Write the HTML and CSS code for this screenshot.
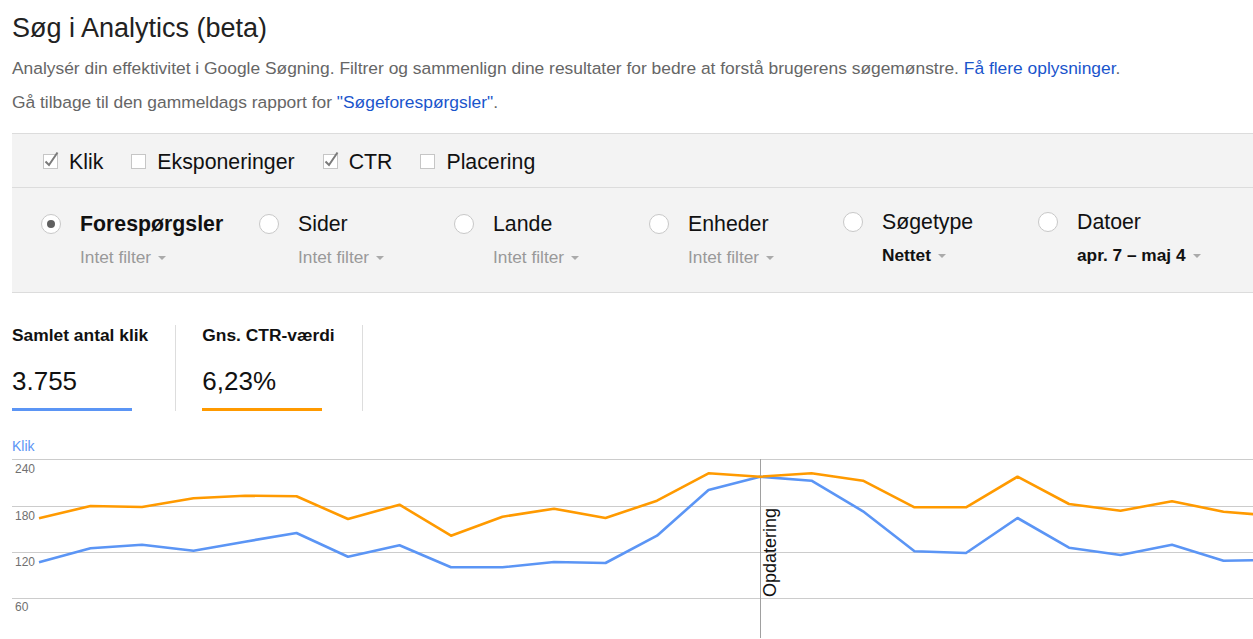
FILE: index.html
```html
<!DOCTYPE html>
<html lang="da">
<head>
    <meta charset="UTF-8">
    <title>Søg i Analytics (beta)</title>
    <link rel="stylesheet" href="styles.css">
</head>
<body>
    <!-- Intro -->
    <h1>Søg i Analytics (beta)</h1>
    <p class="lead">Analysér din effektivitet i Google Søgning. Filtrer og sammenlign dine resultater for bedre at forstå brugerens søgemønstre. <a href="#">Få flere oplysninger</a>.</p>
    <p class="lead">Gå tilbage til den gammeldags rapport for <a href="#">"Søgeforespørgsler"</a>.</p>

    <!-- Filterpanel -->
    <div class="panel">
        <div class="checks">
            <label class="check">
                <svg viewBox="0 0 16 16" width="16" height="16"><rect x="0.5" y="0.5" width="14" height="14" fill="#fff" stroke="#c6c6c6"/><path d="M2.5 7.5 L6 11 L14.5 -1.5" fill="none" stroke="#7a7a7a" stroke-width="2"/></svg>
                Klik
            </label>
            <label class="check">
                <svg viewBox="0 0 16 16" width="16" height="16"><rect x="0.5" y="0.5" width="14" height="14" fill="#fff" stroke="#c6c6c6"/></svg>
                Eksponeringer
            </label>
            <label class="check">
                <svg viewBox="0 0 16 16" width="16" height="16"><rect x="0.5" y="0.5" width="14" height="14" fill="#fff" stroke="#c6c6c6"/><path d="M2.5 7.5 L6 11 L14.5 -1.5" fill="none" stroke="#7a7a7a" stroke-width="2"/></svg>
                CTR
            </label>
            <label class="check">
                <svg viewBox="0 0 16 16" width="16" height="16"><rect x="0.5" y="0.5" width="14" height="14" fill="#fff" stroke="#c6c6c6"/></svg>
                Placering
            </label>
        </div>
        <div class="dims">
            <div class="dim">
                <span class="radio on"></span>
                <div class="dim-text">
                    <span class="dim-name bold">Forespørgsler</span>
                    <span class="dim-value">Intet filter<span class="caret"></span></span>
                </div>
            </div>
            <div class="dim">
                <span class="radio"></span>
                <div class="dim-text">
                    <span class="dim-name">Sider</span>
                    <span class="dim-value">Intet filter<span class="caret"></span></span>
                </div>
            </div>
            <div class="dim">
                <span class="radio"></span>
                <div class="dim-text">
                    <span class="dim-name">Lande</span>
                    <span class="dim-value">Intet filter<span class="caret"></span></span>
                </div>
            </div>
            <div class="dim">
                <span class="radio"></span>
                <div class="dim-text">
                    <span class="dim-name">Enheder</span>
                    <span class="dim-value">Intet filter<span class="caret"></span></span>
                </div>
            </div>
            <div class="dim set">
                <span class="radio"></span>
                <div class="dim-text">
                    <span class="dim-name">Søgetype</span>
                    <span class="dim-value">Nettet<span class="caret"></span></span>
                </div>
            </div>
            <div class="dim set">
                <span class="radio"></span>
                <div class="dim-text">
                    <span class="dim-name">Datoer</span>
                    <span class="dim-value">apr. 7 – maj 4<span class="caret"></span></span>
                </div>
            </div>
        </div>
    </div>

    <!-- Totaler -->
    <div class="totals">
        <div class="total">
            <div class="total-label">Samlet antal klik</div>
            <div class="total-value">3.755</div>
            <div class="total-bar blue"></div>
        </div>
        <div class="total">
            <div class="total-label">Gns. CTR-værdi</div>
            <div class="total-value">6,23%</div>
            <div class="total-bar orange"></div>
        </div>
    </div>

    <!-- Graf -->
    <div class="chart-label">Klik</div>
    <svg class="chart" viewBox="12 455 1241 184" width="1241" height="184">
        <g stroke="#cccccc" stroke-width="1">
            <line x1="12" y1="460.5" x2="1253" y2="460.5"/>
            <line x1="12" y1="507.5" x2="1253" y2="507.5"/>
            <line x1="12" y1="553.5" x2="1253" y2="553.5"/>
            <line x1="12" y1="599.5" x2="1253" y2="599.5"/>
        </g>
        <g class="axis">
            <text x="15" y="474">240</text>
            <text x="15" y="521">180</text>
            <text x="15" y="567">120</text>
            <text x="15" y="612">60</text>
        </g>
        <line x1="760.5" y1="460" x2="760.5" y2="639" stroke="#a0a0a0" stroke-width="1"/>
        <text class="note" transform="translate(776 598) rotate(-90)">Opdatering</text>
        <polyline fill="none" stroke="#5b95f5" stroke-width="2.6" stroke-linejoin="round"
            points="39,563.3 90.5,549.3 142,545.7 193.5,551.7 245,542.7 296.5,534 348,557.7 399.5,546.3 451,568.3 502.5,568.3 554,563 605.5,564 657,536.7 708.5,491 760,477.7 811.5,481.7 863,512.3 914.5,552.3 966,554 1017.5,519 1069,548.7 1120.5,556 1172,545.7 1223.5,561.7 1275,561"/>
        <polyline fill="none" stroke="#ff9a00" stroke-width="2.6" stroke-linejoin="round"
            points="39,519.3 90.5,507 142,508 193.5,499.3 245,496.7 296.5,497.3 348,520 399.5,505.7 451,536.7 502.5,517.7 554,509.7 605.5,519 657,501.7 708.5,474.3 760,477.7 811.5,474.3 863,481.7 914.5,508.3 966,508.3 1017.5,477.7 1069,505 1120.5,511.7 1172,502.3 1223.5,512.7 1275,517"/>
    </svg>
</body>
</html>
```

FILE: styles.css
```css
body {
    margin: 0;
    padding-left: 12px;
    font-family: "Liberation Sans", Arial, sans-serif;
    color: #222;
    background: #fff;
    overflow: hidden;
}
a {
    color: #1a55cc;
    text-decoration: none;
}
h1 {
    margin: 13px 0 0;
    font-size: 27px;
    line-height: 30px;
    font-weight: normal;
}
.lead {
    margin: 15px 0 0;
    font-size: 17.4px;
    line-height: 20px;
    color: #666;
}
.lead + .lead {
    margin-top: 14px;
}
/* Filterpanel */
.panel {
    margin-top: 21px;
    background: #f3f3f3;
    border-top: 1px solid #dcdcdc;
    border-bottom: 1px solid #dcdcdc;
}
.checks {
    display: flex;
    gap: 28px;
    align-items: center;
    box-sizing: border-box;
    height: 54px;
    padding: 3px 0 0 31px;
    border-bottom: 1px solid #dcdcdc;
}
.check {
    display: flex;
    align-items: center;
    gap: 10px;
    font-size: 21.3px;
    color: #111;
}
.check svg {
    overflow: visible;
    flex: none;
}
.dims {
    display: grid;
    grid-template-columns: 218px 195px 195px 194px 195px auto;
    padding: 24px 0 0 29px;
    height: 80px;
}
.dim {
    display: flex;
    gap: 19px;
    align-items: flex-start;
}
.dim.set {
    margin-top: -2px;
}
.radio {
    flex: none;
    display: inline-flex;
    align-items: center;
    justify-content: center;
    width: 18px;
    height: 18px;
    margin-top: 2px;
    border: 1px solid #c8c8c8;
    border-radius: 50%;
    background: #fff;
}
.radio.on::after {
    content: "";
    width: 8px;
    height: 8px;
    border-radius: 50%;
    background: #606060;
}
.dim-text {
    display: flex;
    flex-direction: column;
    gap: 11px;
}
.dim-name {
    font-size: 21.3px;
    line-height: 24px;
    color: #111;
}
.dim-name.bold {
    font-weight: bold;
}
.dim-value {
    font-size: 17.3px;
    line-height: 20px;
    color: #999;
}
.dim.set .dim-value {
    color: #111;
    font-weight: bold;
}
.caret {
    display: inline-block;
    vertical-align: middle;
    margin-left: 7px;
    border-left: 4px solid transparent;
    border-right: 4px solid transparent;
    border-top: 4px solid #aaa;
}
/* Totaler */
.totals {
    display: flex;
    margin-top: 32px;
}
.total {
    padding-right: 27px;
    border-right: 1px solid #ddd;
}
.total + .total {
    padding-left: 26px;
}
.total-label {
    font-size: 17.4px;
    line-height: 20px;
    font-weight: bold;
    color: #111;
}
.total-value {
    margin-top: 21px;
    font-size: 26px;
    line-height: 30px;
    color: #111;
}
.total-bar {
    width: 120px;
    height: 3px;
    margin-top: 12px;
}
.blue {
    background: #5b95f5;
}
.orange {
    background: #ff9a00;
}
/* Graf */
.chart-label {
    margin-top: 27px;
    font-size: 14px;
    line-height: 16px;
    color: #5b95f5;
}
.chart {
    display: block;
    margin-top: 0;
    overflow: hidden;
}
.axis text {
    font-size: 12px;
    fill: #707070;
}
.note {
    font-size: 18px;
    fill: #111;
}
```
